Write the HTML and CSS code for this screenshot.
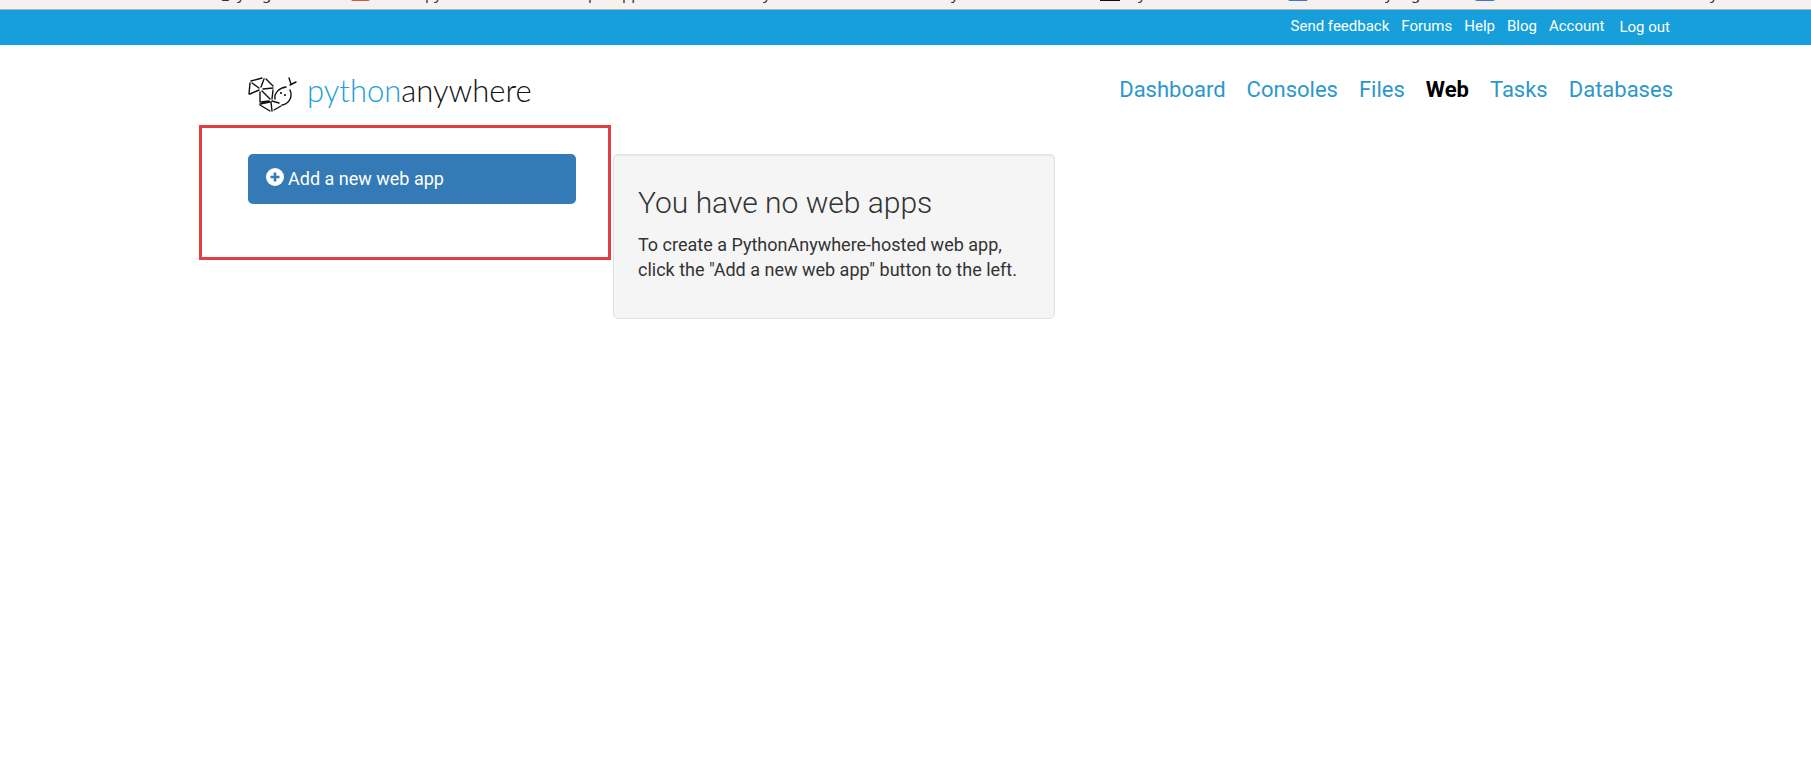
FILE: index.html
```html
<!DOCTYPE html>
<html lang="en">
<head>
<meta charset="utf-8">
<title>Web apps : PythonAnywhere</title>
<link rel="stylesheet" href="styles.css">
</head>
<body>
<svg class="bookmarks" aria-hidden="true">
  <g class="bookmark-text">
    <text x="222" y="-1">_</text><text x="237" y="-1">y</text><text x="262" y="-1">g</text>
    <text x="425" y="-1">py</text><text x="588" y="-1">p</text><text x="622" y="-1">pp</text>
    <text x="763" y="-1">y</text><text x="951" y="-1">y</text>
    <text x="1138" y="-1">y</text><text x="1385" y="-1">y</text><text x="1411" y="-1">g</text>
    <text x="1710" y="-1">y</text>
  </g>
  <rect x="351" y="-8" width="19" height="9" rx="2" fill="#cf5a48"/>
  <rect x="1100" y="-8" width="20" height="9" fill="#111"/>
  <rect x="1288" y="-8" width="20" height="9" rx="2" fill="#3d78c4"/>
  <rect x="1475" y="-8" width="20" height="9" rx="2" fill="#3d78c4"/>
</svg>
<nav class="topbar" aria-label="Account">
  <a href="#">Send feedback</a>
  <a href="#">Forums</a>
  <a href="#">Help</a>
  <a href="#">Blog</a>
  <a href="#">Account</a>
  <button type="button" class="logout">Log out</button>
</nav>
<header class="header">
  <a class="brand" href="#">
    <svg class="brand-mark" viewBox="0 0 49 36" aria-hidden="true">
      <g fill="none" stroke="#111" stroke-width="1.400" stroke-linecap="round">
        <path d="M3 4 14 1M2 6 1 17M4 6 11 11M16 2 13 10M18 2 25 9M2 17 11 13M15 12 25 11M14 14 22 22M12 15 12 25M25 13 24 22M13 25 21 24M12 28 22 34M12 27 22 25M23 25 24 34M24 24 31 26M26 33 33 29"/>
        <path d="M27 22C26 16 31 11 38 10M42 13C45 20 41 27 34 28M42 8 48 5M43 7 41 1"/>
      </g>
      <circle cx="33" cy="16" r="1"/><circle cx="37" cy="18" r="1"/>
    </svg>
    <span class="brand-name"><span class="brand-python">python</span>anywhere</span>
  </a>
  <nav class="mainnav" aria-label="Main">
    <a href="#">Dashboard</a>
    <a href="#">Consoles</a>
    <a href="#">Files</a>
    <a href="#" class="active" aria-current="page">Web</a>
    <a href="#">Tasks</a>
    <a href="#">Databases</a>
  </nav>
</header>
<main class="content">
  <div class="sidebar">
    <button type="button" class="add-app">
      <svg class="plus" viewBox="0 0 18 18" aria-hidden="true"><circle cx="9" cy="9" r="9" fill="#fff"/><path d="M9 4.500V13.500M4.500 9H13.500" stroke="#337ab7" stroke-width="2.600"/></svg>
      <span>Add a new web app</span>
    </button>
    <div class="highlight"></div>
  </div>
  <section class="well">
    <h1>You have no web apps</h1>
    <p>To create a PythonAnywhere-hosted web app, click the "Add a new web app" button to the left.</p>
  </section>
</main>
</body>
</html>
```
FILE: styles.css
```css
* { box-sizing: border-box; }
body {
  margin: 0;
  background: #fff;
  color: #333;
  font: 18px/25px Roboto, "Liberation Sans", sans-serif;
}
a { text-decoration: none; }
button { font: inherit; border: 0; cursor: pointer; }

.bookmarks {
  display: block;
  width: 100%;
  height: 10px;
  background: #f4f1ef;
  border-bottom: 1px solid #b0b4b8;
}
.bookmark-text { font: 15px "Noto Sans", sans-serif; fill: #333; }

.topbar {
  display: flex;
  justify-content: flex-end;
  gap: 12px;
  height: 35px;
  padding: 6px 141px 0 248px;
  background: #169fda;
  font-size: 15px;
  line-height: 20px;
}
.topbar a, .logout { color: #fff; }
.logout {
  align-self: flex-start;
  margin-left: 3px;
  padding: 1px 0 0;
  background: none;
}

.header {
  display: flex;
  justify-content: space-between;
  align-items: flex-start;
  padding: 28px 138px 0 248px;
}
.brand { display: flex; gap: 10px; color: #111; }
.brand-mark { width: 49px; height: 36px; margin-top: 4px; }
.brand-name {
  height: 38px;
  font: 300 31px/34px Lato, sans-serif;
}
.brand-python { color: #1d9fd7; }
.mainnav {
  display: flex;
  gap: 21px;
  font-size: 22px;
  line-height: 34px;
}
.mainnav a { color: #2c97cb; }
.mainnav .active { color: #000; font-weight: 700; }

.content {
  display: grid;
  grid-template-columns: 328px minmax(0, 442px);
  gap: 37px;
  align-items: start;
  padding: 41px 138px 0 248px;
}
.sidebar { position: relative; }
.add-app {
  display: flex;
  align-items: center;
  gap: 4px;
  width: 100%;
  padding: 12px 18px;
  border-radius: 5px;
  background: #337ab7;
  color: #fff;
  line-height: 26px;
}
.plus { width: 18px; height: 18px; margin-bottom: 4px; }
.highlight {
  position: absolute;
  inset: -29px -35px -56px -49px;
  border: 3px solid #e13d42;
  pointer-events: none;
}
.well {
  padding: 24px;
  padding-bottom: 36px;
  border: 1px solid #e3e3e3;
  border-radius: 5px;
  background: #f5f5f5;
  box-shadow: inset 0 1px 1px rgba(0, 0, 0, 0.05);
}
.well h1 {
  margin: 6px 0 11px;
  font-size: 30px;
  font-weight: 300;
  line-height: 36px;
}
.well p { margin: 0; }
```
